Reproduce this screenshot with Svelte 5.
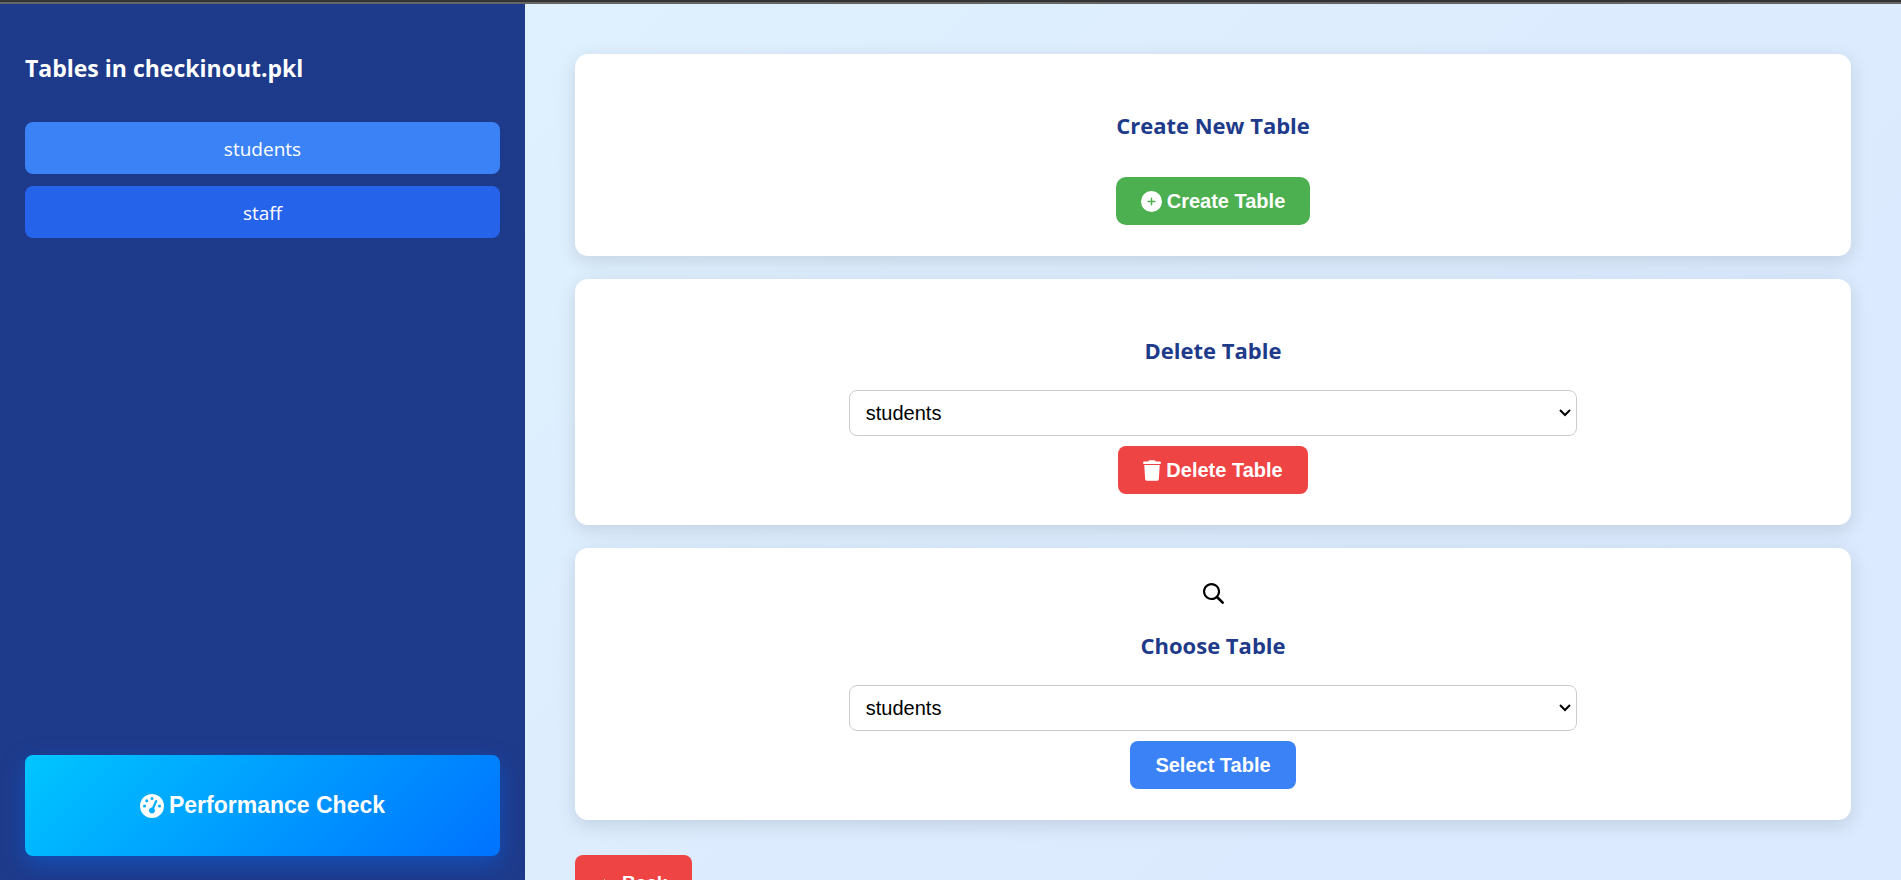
<script>
  const tables = ['students', 'staff'];
  let active = $state('students');
  let toDelete = $state('students');
  let toSelect = $state('students');
</script>

<div class="page">
  <aside>
    <h2>Tables in checkinout.pkl</h2>
    <nav>
      {#each tables as table}
        <a href="#{table}" class:active={table === active} onclick={() => (active = table)}>{table}</a>
      {/each}
    </nav>
    <button class="performance">
      <svg viewBox="0 0 512 512" width="24" height="24" aria-hidden="true">
        <path fill-rule="evenodd" d="M0 256a256 256 0 1 1 512 0A256 256 0 1 1 0 256zM288 96a32 32 0 1 0-64 0 32 32 0 1 0 64 0zM256 416c35.300 0 64-28.700 64-64 0-17.400-6.900-33.100-18.100-44.600L366 161.700c5.300-12.100-.2-26.300-12.300-31.600s-26.300 .2-31.600 12.300L257.900 288c-.6 0-1.300 0-1.900 0-35.300 0-64 28.700-64 64s28.700 64 64 64zM176 144a32 32 0 1 0-64 0 32 32 0 1 0 64 0zM96 288a32 32 0 1 0 0-64 32 32 0 1 0 0 64zm352-32a32 32 0 1 0-64 0 32 32 0 1 0 64 0z" />
      </svg>
      Performance Check
    </button>
  </aside>

  <main>
    <section>
      <h3 class="wide">Create New Table</h3>
      <button class="create">
        <svg viewBox="0 0 512 512" width="21" height="21" aria-hidden="true">
          <path fill-rule="evenodd" d="M256 512A256 256 0 1 0 256 0a256 256 0 1 0 0 512zM238 338V274H174a18 18 0 0 1 0-36H238V174a18 18 0 0 1 36 0V238H338a18 18 0 0 1 0 36H274V338a18 18 0 0 1-36 0z" />
        </svg>
        Create Table
      </button>
    </section>

    <section>
      <h3>Delete Table</h3>
      <select aria-label="Table to delete" bind:value={toDelete}>
        {#each tables as table}<option>{table}</option>{/each}
      </select>
      <button class="danger">
        <svg viewBox="0 0 448 512" width="18" height="21" aria-hidden="true">
          <path d="M135.200 17.700L128 32H32C14.300 32 0 46.300 0 64s14.300 32 32 32H416c17.700 0 32-14.300 32-32s-14.300-32-32-32H320l-7.200-14.300C307.400 6.800 296.300 0 284.200 0H163.800c-12.100 0-23.200 6.800-28.600 17.700zM416 118H32L53.200 467c1.600 25.300 22.600 45 47.900 45H346.900c25.300 0 46.300-19.700 47.900-45L416 118z" />
        </svg>
        Delete Table
      </button>
    </section>

    <section>
      <svg class="search" viewBox="0 0 512 512" width="21" height="21" aria-hidden="true">
        <path d="M416 208c0 45.900-14.900 88.300-40 122.700L502.600 457.400c12.500 12.500 12.500 32.800 0 45.300s-32.800 12.500-45.300 0L330.700 376c-34.400 25.200-76.800 40-122.700 40C93.100 416 0 322.900 0 208S93.100 0 208 0S416 93.100 416 208zM208 364a156 156 0 1 0 0-312 156 156 0 1 0 0 312z" />
      </svg>
      <h3>Choose Table</h3>
      <select aria-label="Table to open" bind:value={toSelect}>
        {#each tables as table}<option>{table}</option>{/each}
      </select>
      <button class="primary">Select Table</button>
    </section>

    <button class="danger back">
      <svg viewBox="0 0 17 10" width="17" height="10" aria-hidden="true">
        <path d="M0 5L5 1L5 4H17V6H5V9Z" />
      </svg>
      Back
    </button>
  </main>
</div>

<style>
  :global(body) {
    margin: 0;
  }

  .page {
    box-sizing: border-box;
    display: flex;
    height: 100vh;
    overflow: hidden;
    border-top: 2px solid #333;
    font-family: 'Segoe UI', 'Open Sans', sans-serif;
    font-size: 19px;
    background: linear-gradient(135deg, #e0f2fe, #dbeafe 80%);
    box-shadow: inset 0 2px #666;
  }

  aside {
    box-sizing: border-box;
    display: flex;
    flex-direction: column;
    flex: 0 0 525px;
    margin-top: 2px;
    padding: 47px 25px 24px;
    background: #1e3a8a;
    color: #fff;
  }

  h2 {
    margin: 0 0 37px;
    font-size: 23px;
    font-weight: 700;
    line-height: 34px;
  }

  nav {
    display: flex;
    flex-direction: column;
    gap: 12px;
  }

  nav a {
    padding: 13px 12px 11px;
    border-radius: 8px;
    background: #2563eb;
    color: #fff;
    line-height: 28px;
    text-align: center;
    text-decoration: none;
  }

  nav a.active {
    background: #3b82f6;
  }

  button {
    display: inline-flex;
    align-items: center;
    justify-content: center;
    gap: 5px;
    height: 48px;
    padding: 0 25px;
    border: 0;
    border-radius: 8px;
    color: #fff;
    font: bold 20px Arial, 'Liberation Sans', sans-serif;
    cursor: pointer;
  }

  svg {
    flex: none;
    fill: currentColor;
  }

  .performance {
    height: 101px;
    margin-top: auto;
    background: linear-gradient(135deg, #00c6ff, #0072ff);
    box-shadow: 0 8px 25px rgba(0, 114, 255, 0.4);
    font-size: 23px;
  }

  main {
    box-sizing: border-box;
    flex: 1;
    display: flex;
    flex-direction: column;
    gap: 23px;
    margin-top: 2px;
    padding: 50px;
    overflow: hidden;
  }

  section {
    display: flex;
    flex: none;
    flex-direction: column;
    align-items: center;
    padding: 31px;
    border-radius: 13px;
    background: #fff;
    box-shadow: 0 5px 19px rgba(0, 0, 0, 0.12);
  }

  h3 {
    margin: 24px 0;
    color: #1e3a8a;
    font-size: 22px;
    font-weight: 700;
    line-height: 32px;
  }

  h3.wide {
    margin-bottom: 36px;
  }

  .search {
    margin: 4px 0 1px;
  }

  select {
    box-sizing: border-box;
    width: 60%;
    height: 46px;
    margin-bottom: 10px;
    padding: 0 24px 0 16px;
    border: 1px solid #ccc;
    border-radius: 8px;
    appearance: none;
    background: #fff url("data:image/svg+xml,%3Csvg xmlns='http://www.w3.org/2000/svg' width='12' height='8' fill='none' stroke='black' stroke-width='2'%3E%3Cpath d='M1 1l5 5 5-5'/%3E%3C/svg%3E") no-repeat right 5px center;
    color: #000;
    font: 20px Arial, 'Liberation Sans', sans-serif;
  }

  .create {
    border-radius: 10px;
    background: #4caf50;
  }

  .danger {
    background: #ef4444;
  }

  .primary {
    background: #3b82f6;
  }

  .back {
    flex: none;
    align-self: flex-start;
    height: 56px;
    margin-top: 12px;
    font-size: 19px;
  }
</style>
